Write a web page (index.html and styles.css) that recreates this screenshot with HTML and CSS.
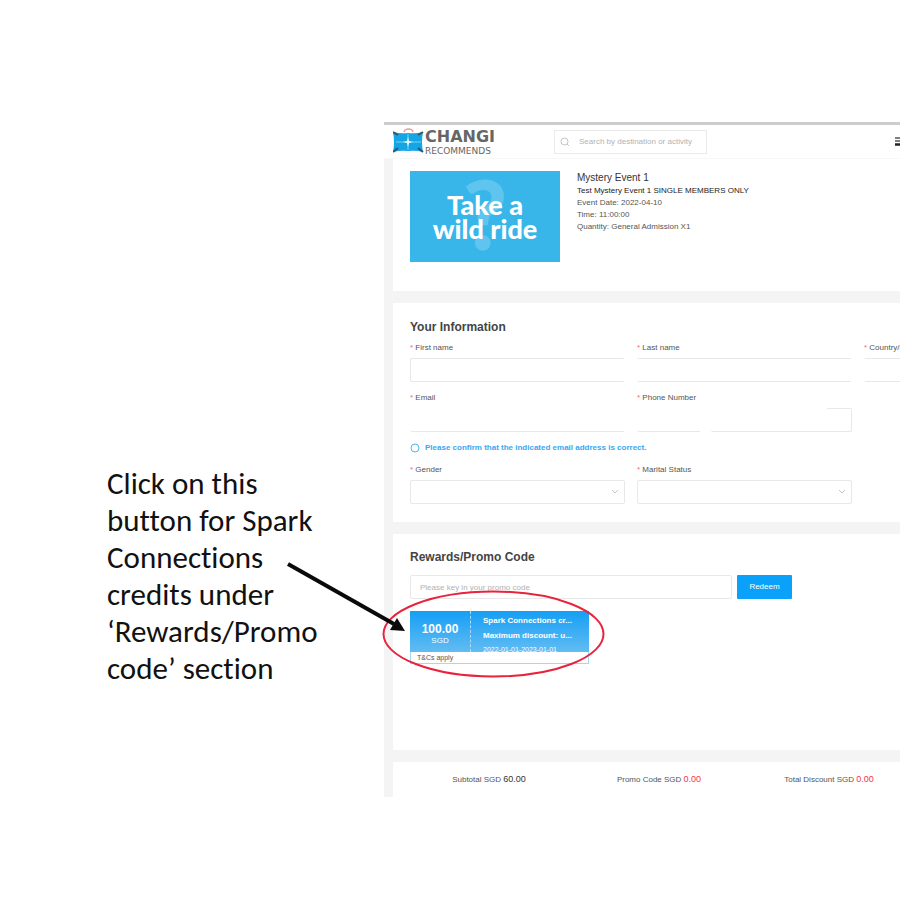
FILE: index.html
```html
<!DOCTYPE html>
<html lang="en">
<head>
<meta charset="utf-8">
<title>Changi Recommends checkout guide</title>
<link rel="stylesheet" href="styles.css">
</head>
<body>
<main class="slide">
  <p class="note">Click on this button for Spark Connections credits under ‘Rewards/Promo code’ section</p>

  <div class="app">
    <header class="topbar">
      <a class="logo" href="#">
        <svg class="logo-icon" width="32" height="26" viewBox="0 0 32 26" aria-hidden="true">
          <path d="M11 4C12 0 19 0 20 4" fill="none" stroke="#e0a59c" stroke-width="1.5"/>
          <path d="M0 4Q8 6 15 5Q23 6 30 4Q28 14 30 24Q23 22 15 23Q8 22 0 24Q2 14 0 4Z" fill="#14a6e4"/>
          <path d="M0 4L5 7M30 4L25 7M0 24L5 20M30 24L25 20" stroke="#35556a" stroke-width="2"/>
          <path d="M15 6V22M3 14H28" stroke="#7bd3f5" stroke-width="1"/>
          <path d="M15 9L16 13L20 14L16 15L15 19L14 15L10 14L14 13Z" fill="#e5f8ff"/>
        </svg>
        <span class="logo-text"><span class="logo-name">CHANGI</span><span class="logo-sub">RECOMMENDS</span></span>
      </a>
      <label class="search">
        <svg width="10" height="10" viewBox="0 0 10 10" fill="none" stroke="#c4c4c4" aria-hidden="true"><circle cx="4.500" cy="4.500" r="3.500"/><path d="M7 7L9 9"/></svg>
        <input type="search" placeholder="Search by destination or activity" aria-label="Search">
      </label>
      <button class="menu" aria-label="Menu">
        <svg width="12" height="9" viewBox="0 0 12 9" aria-hidden="true"><path d="M0 1H12M0 4H12" stroke="#555" stroke-width="1.500"/><path d="M0 7.500H12" stroke="#222" stroke-width="2.500"/></svg>
      </button>
    </header>

    <section class="card event">
      <div class="poster">
        <span class="poster-mark" aria-hidden="true">?</span>
        <span class="poster-text">Take a<br>wild ride</span>
      </div>
      <div class="event-info">
        <h1>Mystery Event 1</h1>
        <p class="strong">Test Mystery Event 1 SINGLE MEMBERS ONLY</p>
        <p>Event Date: 2022-04-10</p>
        <p>Time: 11:00:00</p>
        <p>Quantity: General Admission X1</p>
      </div>
    </section>

    <section class="card info">
      <h2>Your Information</h2>
      <form class="fields">
        <div class="field"><label for="first">First name</label><input class="box no-right" id="first" type="text"></div>
        <div class="field"><label for="last">Last name</label><input class="box no-sides" id="last" type="text"></div>
        <div class="field"><label for="country">Country/Region</label><input class="box no-sides" id="country" type="text"></div>
        <div class="field"><label for="email">Email</label><input class="box line" id="email" type="email"></div>
        <div class="field"><label for="phone">Phone Number</label>
          <div class="phone"><input class="box line code" type="text" aria-label="Country code"><input class="box number" id="phone" type="tel"></div>
        </div>
        <p class="hint"><svg width="10" height="10" viewBox="0 0 10 10" aria-hidden="true"><circle cx="5" cy="5" r="4" fill="none" stroke="#4db4f2"/></svg>Please confirm that the indicated email address is correct.</p>
        <div class="field first-col"><label for="gender">Gender</label>
          <div class="pick"><select class="box" id="gender"><option></option></select><svg width="8" height="6" viewBox="0 0 8 6" aria-hidden="true"><path d="M1 1L4 4L7 1" fill="none" stroke="#c4c4c4"/></svg></div>
        </div>
        <div class="field"><label for="marital">Marital Status</label>
          <div class="pick"><select class="box" id="marital"><option></option></select><svg width="8" height="6" viewBox="0 0 8 6" aria-hidden="true"><path d="M1 1L4 4L7 1" fill="none" stroke="#c4c4c4"/></svg></div>
        </div>
      </form>
    </section>

    <section class="card rewards">
      <h2>Rewards/Promo Code</h2>
      <form class="promo">
        <input class="box" type="text" placeholder="Please key in your promo code" aria-label="Promo code">
        <button type="button" class="redeem">Redeem</button>
      </form>
      <div class="coupon-area">
        <button class="coupon">
          <span class="coupon-main">
            <span class="amount"><b>100.00</b><span>SGD</span></span>
            <span class="details"><b>Spark Connections cr...</b><b>Maximum discount: u...</b><span>2022-01-01-2023-01-01</span></span>
          </span>
          <span class="terms">T&amp;Cs apply</span>
        </button>
        <svg class="callout" width="340" height="130" viewBox="0 0 340 130" aria-hidden="true">
          <ellipse cx="213.500" cy="74" rx="110" ry="42.500" fill="none" stroke="#e8233c" stroke-width="2"/>
          <path d="M8 4L114 64" stroke="#0a0a0a" stroke-width="4"/>
          <path d="M125 71L110 70L117 58Z" fill="#0a0a0a"/>
        </svg>
      </div>
    </section>

    <footer class="card totals">
      <span>Subtotal SGD <em>60.00</em></span>
      <span>Promo Code SGD <em class="red">0.00</em></span>
      <span>Total Discount SGD <em class="red">0.00</em></span>
    </footer>
  </div>
</main>
</body>
</html>
```
FILE: styles.css
```css
* { box-sizing: border-box; }

body {
  margin: 0;
  background: #fff;
  font-family: "Liberation Sans", Arial, sans-serif;
}

h1, h2, p { margin: 0; }

input, select, button {
  margin: 0;
  font: inherit;
  color: inherit;
}

.slide {
  display: grid;
  grid-template-columns: 384px minmax(0, 1fr);
  padding: 122px 0 104px;
  overflow: hidden;
}

.note {
  align-self: start;
  margin: 343px 48px 0 107px;
  font: 31px/37px Carlito, Calibri, Lato, sans-serif;
  font-variant-ligatures: none;
  color: #111;
}

.app {
  padding-left: 9px;
  border-top: 3px solid #cdcdcd;
  background: #f4f4f4;
  font-size: 8px;
  line-height: 12px;
  color: #555;
}

.topbar {
  display: flex;
  align-items: center;
  height: 34px;
  margin-left: -9px;
  padding-left: 9px;
  background: #fff;
  border-bottom: 1px solid #f8f8f8;
}

.logo {
  display: flex;
  flex: none;
  width: 161px;
  color: #666;
  text-decoration: none;
}

.logo-text {
  display: flex;
  flex-direction: column;
  font-family: "DejaVu Sans", sans-serif;
}

.logo-name {
  font-size: 16px;
  line-height: 18px;
  font-weight: bold;
}

.logo-sub {
  font-size: 9px;
  line-height: 10px;
}

.search {
  display: flex;
  flex: none;
  align-items: center;
  gap: 9px;
  width: 153px;
  height: 24px;
  padding-left: 5px;
  border: 1px solid #eaeaea;
}

.search input {
  flex: 1;
  min-width: 0;
  padding: 0;
  border: 0;
  outline: 0;
  background: none;
}

::placeholder { color: #b2b2b2; opacity: 1; }

.menu {
  display: flex;
  flex: none;
  margin-left: 188px;
  padding: 0;
  border: 0;
  background: none;
}

.card {
  margin-bottom: 12px;
  padding-left: 17px;
  background: #fff;
}

.event {
  display: flex;
  gap: 17px;
  padding-top: 12px;
  padding-bottom: 29px;
}

.poster {
  display: grid;
  place-items: center;
  flex: none;
  width: 150px;
  height: 91px;
  background: #38b6ea;
  overflow: hidden;
}

.poster > span { grid-area: 1 / 1; }

.poster-mark {
  align-self: start;
  font: 900 96px/84px Lato, sans-serif;
  color: #5fc5ef;
}

.poster-text {
  font: 900 27px/24px Lato, sans-serif;
  text-align: center;
  color: #fff;
}

.event-info { white-space: nowrap; }

.event-info h1 {
  font-size: 10px;
  line-height: 14px;
  font-weight: normal;
  color: #333;
}

.event-info .strong { color: #222; }

h2 {
  font-size: 12px;
  line-height: 14px;
  color: #444;
}

.info { padding-top: 17px; padding-bottom: 18px; }

.fields {
  display: grid;
  grid-template-columns: repeat(3, 215px);
  gap: 10px 12px;
  margin-top: 8px;
}

.field { min-width: 0; }

.field label { display: block; white-space: nowrap; }

.field label::before { content: "* "; color: #f56c6c; }

.box {
  display: block;
  width: 100%;
  height: 24px;
  padding: 0 9px;
  border: 1px solid #e8e8e8;
  border-radius: 2px;
  outline: 0;
  background: #fff;
  appearance: none;
}

.field .box { margin-top: 4px; }

.no-right { border-right-color: transparent; }

.no-sides { border-left-color: transparent; border-right-color: transparent; }

.line { border-color: transparent transparent #e8e8e8; }

.phone { display: flex; gap: 10px; }

.phone .code { flex: 0 0 64px; }

.phone .number {
  border-top: 0;
  border-left: 0;
  background: linear-gradient(#e8e8e8, #e8e8e8) right top / 24px 1px no-repeat;
}

.hint {
  display: flex;
  align-items: center;
  grid-column: 1 / -1;
  gap: 5px;
  font-weight: bold;
  color: #3aa6f0;
}

.first-col { grid-column: 1; }

.pick { position: relative; }

.pick svg {
  position: absolute;
  top: 9px;
  right: 6px;
}

.rewards {
  padding-top: 16px;
  padding-bottom: 86px;
}

.promo {
  display: flex;
  gap: 5px;
  margin-top: 11px;
}

.promo .box { width: 322px; }

.redeem {
  width: 55px;
  height: 24px;
  padding: 0;
  border: 0;
  border-radius: 1px;
  background: #0aa1fb;
  color: #fff;
}

.coupon-area {
  position: relative;
  margin-top: 12px;
}

.coupon {
  display: block;
  width: 179px;
  padding: 0;
  border: 0;
  background: #fff;
  text-align: left;
}

.coupon-main {
  display: flex;
  height: 41px;
  background: linear-gradient(#159ff5, #62bcf2);
  color: #fff;
  overflow: hidden;
}

.amount {
  display: flex;
  flex-direction: column;
  flex: 0 0 61px;
  padding-top: 12px;
  border-right: 1px dashed #a9dcfb;
  text-align: center;
}

.amount b { font-size: 12px; }

.details {
  display: flex;
  flex-direction: column;
  gap: 3px;
  padding: 4px 0 0 12px;
  white-space: nowrap;
}

.details > * { flex: none; }

.details span { font-size: 7px; line-height: 9px; }

.terms {
  display: block;
  height: 12px;
  padding-left: 6px;
  border: 1px solid #a5d8f5;
  border-top: 0;
  font-size: 7px;
  line-height: 11px;
}

.callout {
  position: absolute;
  top: -51px;
  left: -130px;
  pointer-events: none;
}

.totals {
  display: grid;
  grid-template-columns: repeat(3, 170px);
  margin-bottom: 0;
  padding: 11px 0 11px 11px;
  text-align: center;
}

.totals em {
  font-size: 9px;
  font-style: normal;
  color: #333;
}

.totals .red { color: #f5344a; }
```
